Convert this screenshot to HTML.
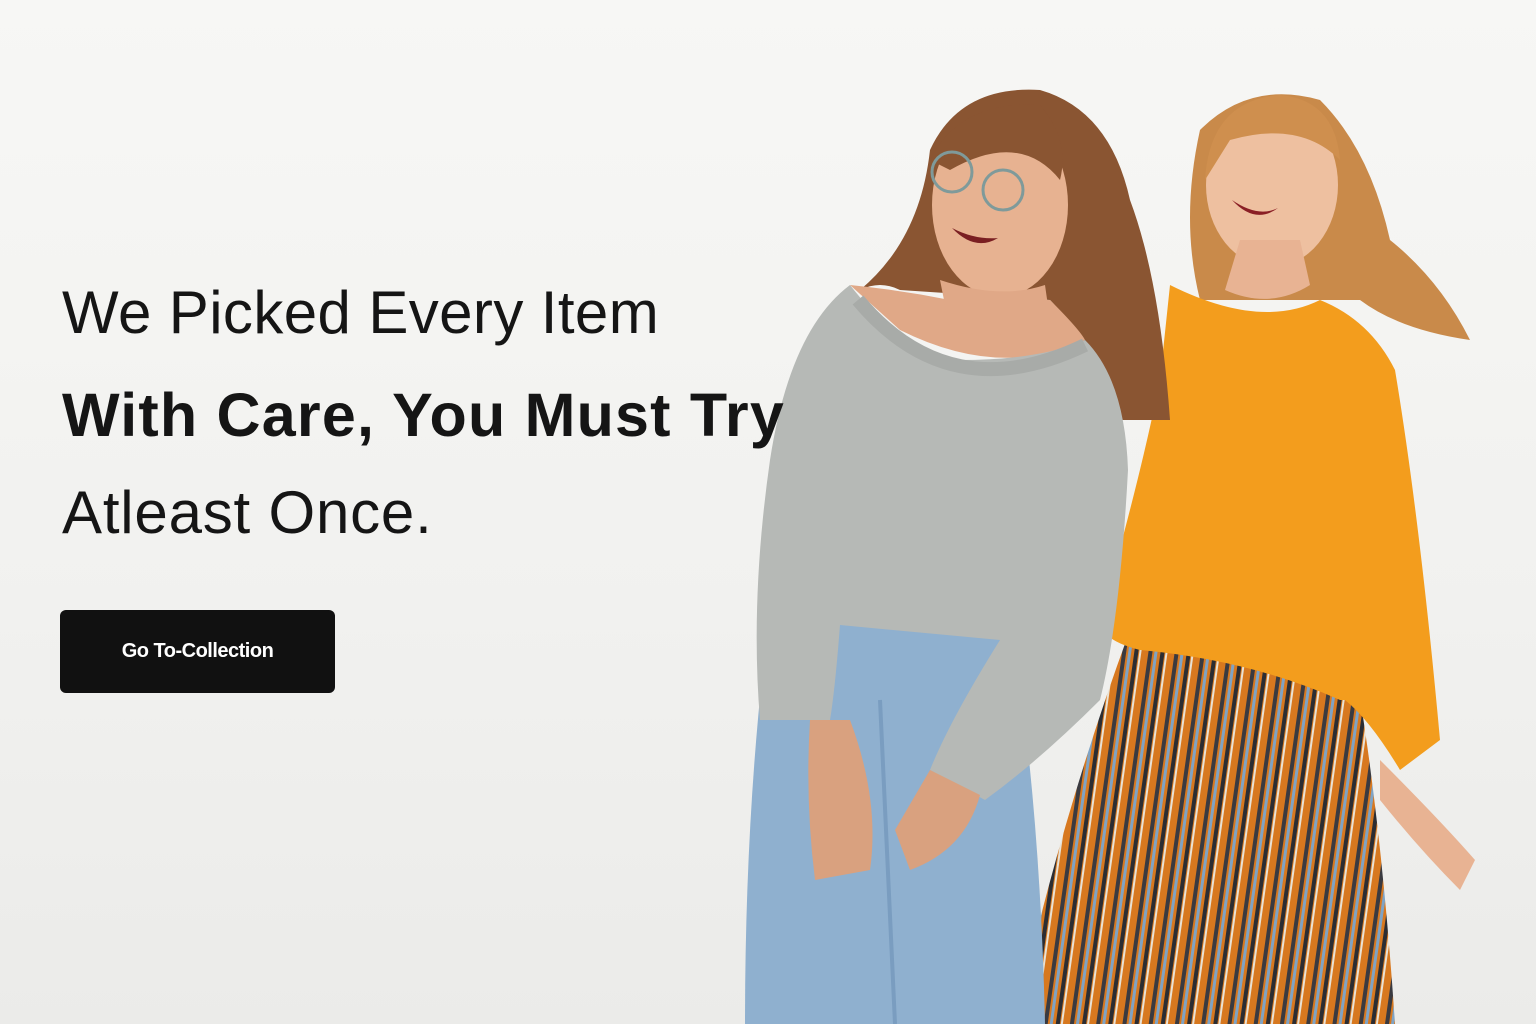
<!DOCTYPE html>
<html><head><meta charset="utf-8"><style>
html,body{margin:0;padding:0}
body{width:1536px;height:1024px;overflow:hidden;position:relative;background:linear-gradient(180deg,#f7f7f5 0%,#f1f1ef 60%,#ebebe9 100%);font-family:"Liberation Sans",sans-serif}
svg{position:absolute;left:0;top:0}
.t{position:absolute;left:62px;color:#151515;white-space:nowrap}
.l1{top:278px;font-size:60px;letter-spacing:0.4px}
.l2{top:380px;font-size:61px;font-weight:bold;letter-spacing:1.2px}
.l3{top:478px;font-size:60px;letter-spacing:0.8px}
.btn{position:absolute;left:60px;top:610px;width:275px;height:83px;background:#111;border-radius:6px;color:#fff;font-size:20px;font-weight:bold;line-height:83px;text-align:center;letter-spacing:-0.5px}
</style></head><body>
<svg width="1536" height="1024" viewBox="0 0 1536 1024">
<defs>
<pattern id="st" width="26" height="20" patternUnits="userSpaceOnUse" patternTransform="rotate(8)">
<rect width="26" height="20" fill="#d7781f"/><rect x="6" width="4" height="20" fill="#3a3a40"/><rect x="12" width="3" height="20" fill="#7fa3c4"/><rect x="18" width="4" height="20" fill="#2b2d33"/><rect x="23" width="2" height="20" fill="#e9e2d5"/>
</pattern>
</defs>
<path d="M1200 130 Q1250 80 1320 100 Q1370 150 1390 240 Q1440 280 1470 340 Q1400 330 1360 300 L1200 300 Q1180 220 1200 130Z" fill="#c98a4a"/>
<path d="M1130 630 L1350 640 Q1380 800 1395 1024 L1015 1024 Q1060 820 1130 630Z" fill="url(#st)"/>
<path d="M1170 285 Q1260 330 1320 300 Q1370 320 1395 370 Q1420 520 1440 740 L1400 770 Q1370 720 1345 700 L1340 700 Q1250 660 1140 650 Q1100 640 1100 620 Q1140 480 1160 380 Z" fill="#f39d1d"/>
<path d="M1380 760 Q1440 820 1475 860 L1460 890 Q1420 850 1380 800Z" fill="#e8b393"/>
<ellipse cx="1272" cy="185" rx="66" ry="82" fill="#eec0a0"/>
<path d="M1225 290 Q1270 310 1310 285 L1300 240 L1240 240Z" fill="#e8b393"/>
<path d="M1205 180 Q1210 100 1280 95 Q1335 100 1340 160 Q1300 120 1230 140Z" fill="#cf8f4e"/>
<path d="M1232 200 Q1255 225 1278 208 Q1258 218 1232 200Z" fill="#8a1f25"/>
<path d="M930 150 Q960 85 1040 90 Q1110 110 1130 200 Q1160 280 1170 420 L1120 420 Q1080 330 1050 300 L900 290 Q880 280 860 290 Q920 240 930 150Z" fill="#8a5532"/>
<path d="M770 610 L1010 615 Q1040 800 1045 1024 L745 1024 Q745 800 770 610Z" fill="#8fb0cf"/>
<path d="M880 700 L895 1024" stroke="#7a9dc0" stroke-width="4"/>
<path d="M850 285 Q900 290 950 300 L1050 300 Q1080 330 1085 340 Q1000 380 900 330Z" fill="#e0a887"/>
<path d="M850 285 Q900 350 960 360 Q1040 360 1085 340 Q1125 380 1128 470 Q1120 620 1100 700 Q1040 760 985 800 L930 770 Q950 720 1000 640 L840 625 Q835 690 830 720 L760 720 Q750 600 770 460 Q790 330 850 285Z" fill="#b6b9b6"/>
<path d="M858 300 Q950 410 1085 345" stroke="#a8aba8" stroke-width="14" fill="none"/>
<path d="M810 720 L850 720 Q880 800 870 870 L815 880 Q805 800 810 720Z" fill="#d9a17f"/>
<path d="M930 770 L980 795 Q965 850 910 870 L895 830Z" fill="#d9a17f"/>
<ellipse cx="1000" cy="205" rx="68" ry="92" fill="#e7b291"/>
<path d="M940 280 Q1000 300 1045 285 L1050 320 Q1000 345 950 330Z" fill="#e0a887"/>
<path d="M930 160 Q960 100 1040 105 Q1070 140 1060 180 Q1020 130 950 170Z" fill="#8a5532"/>
<circle cx="952" cy="172" r="20" fill="none" stroke="#7f9a9a" stroke-width="3"/>
<circle cx="1003" cy="190" r="20" fill="none" stroke="#7f9a9a" stroke-width="3"/>
<path d="M952 228 Q975 252 998 238 Q975 240 952 228Z" fill="#7a1f22"/>
</svg>
<div class="t l1">We Picked Every Item</div>
<div class="t l2">With Care, You Must Try</div>
<div class="t l3">Atleast Once.</div>
<div class="btn">Go To-Collection</div>
</body></html>
